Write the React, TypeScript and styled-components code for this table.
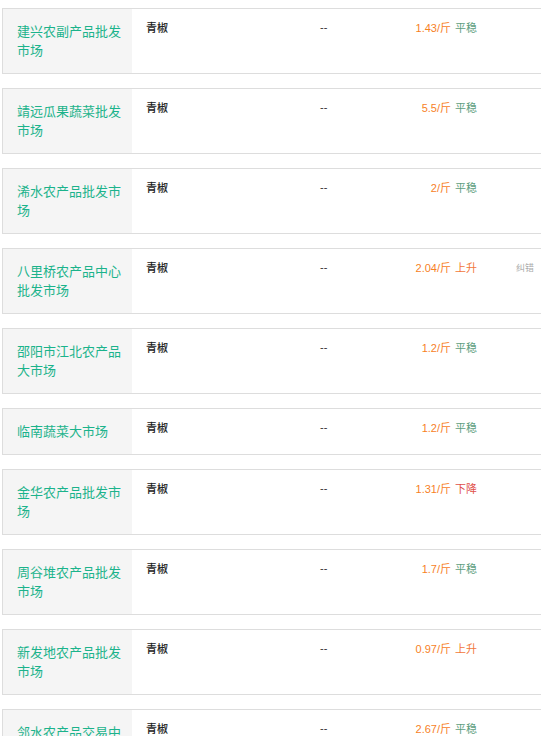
import React from "react";
import styled, { createGlobalStyle } from "styled-components";

const GlobalStyle = createGlobalStyle`
  html, body {
    margin: 0;
    padding: 0;
    background: #ffffff;
    overflow: hidden;
  }
  body {
    font-family: "Noto Sans CJK SC", "Noto Sans", sans-serif;
  }
`;

const List = styled.div`
  display: flex;
  flex-direction: column;
  gap: 14px;
  padding: 8px 0 0 2px;
`;

const Card = styled.div`
  display: flex;
  align-items: stretch;
  border: 1px solid #dddddd;
  border-right: none;
  background: #ffffff;
`;

const MarketCell = styled.div`
  box-sizing: border-box;
  flex: 0 0 129px;
  width: 129px;
  padding: 12px 8px 14px 14px;
  background: #f5f5f5;
  color: #1bb38b;
  font-size: 13px;
  line-height: 19px;
`;

const InfoCell = styled.div`
  flex: 1;
  display: grid;
  grid-template-columns: 174px 60px 97px 1fr;
  align-items: start;
  padding: 9px 0 0 14px;
  font-size: 11px;
  line-height: 19px;
`;

const Variety = styled.span`
  color: #222222;
  font-weight: 500;
`;

const Spec = styled.span`
  color: #333333;
  font-family: "Liberation Sans", sans-serif;
`;

const PriceBox = styled.span`
  text-align: right;
  white-space: nowrap;
`;

const Price = styled.span`
  color: #f7811f;
  font-family: "Liberation Sans", "Noto Sans CJK SC", sans-serif;
`;

const trendColors: Record<string, string> = {
  平稳: "#5d9e80",
  上升: "#f2773a",
  下降: "#e0504a",
};

const Trend = styled.span<{ $trend: string }>`
  margin-left: 4px;
  color: ${(p) => trendColors[p.$trend] || "#5d9e80"};
`;

const Report = styled.span`
  padding-left: 39px;
  font-size: 9px;
  color: #aaaaaa;
`;

type Row = {
  market: string;
  price: string;
  trend: string;
  report?: boolean;
};

const rows: Row[] = [
  { market: "建兴农副产品批发市场", price: "1.43", trend: "平稳" },
  { market: "靖远瓜果蔬菜批发市场", price: "5.5", trend: "平稳" },
  { market: "浠水农产品批发市场", price: "2", trend: "平稳" },
  { market: "八里桥农产品中心批发市场", price: "2.04", trend: "上升", report: true },
  { market: "邵阳市江北农产品大市场", price: "1.2", trend: "平稳" },
  { market: "临南蔬菜大市场", price: "1.2", trend: "平稳" },
  { market: "金华农产品批发市场", price: "1.31", trend: "下降" },
  { market: "周谷堆农产品批发市场", price: "1.7", trend: "平稳" },
  { market: "新发地农产品批发市场", price: "0.97", trend: "上升" },
  { market: "邻水农产品交易中心", price: "2.67", trend: "平稳" },
];

export default function App() {
  return (
    <>
      <GlobalStyle />
      <List>
        {rows.map((r, i) => (
          <Card key={i}>
            <MarketCell>{r.market}</MarketCell>
            <InfoCell>
              <Variety>青椒</Variety>
              <Spec>--</Spec>
              <PriceBox>
                <Price>{r.price}/斤</Price>
                <Trend $trend={r.trend}>{r.trend}</Trend>
              </PriceBox>
              {r.report ? <Report>纠错</Report> : <span />}
            </InfoCell>
          </Card>
        ))}
      </List>
    </>
  );
}
